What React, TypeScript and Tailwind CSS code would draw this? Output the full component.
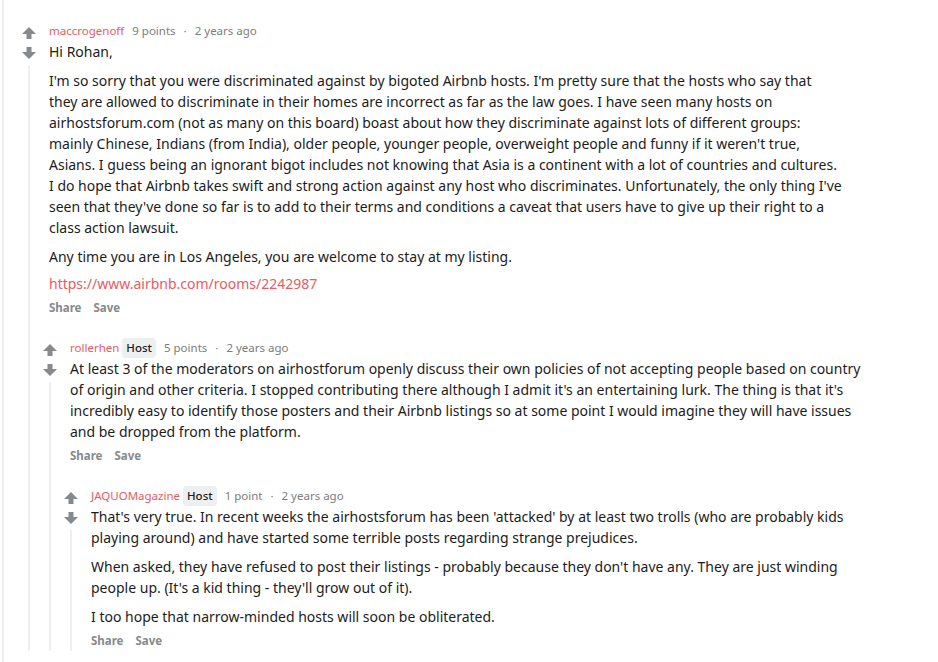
import React from "react";

type CommentData = {
  author: string;
  host?: boolean;
  points: string;
  age: string;
  body: React.ReactNode;
  replies?: CommentData[];
};

function Arrow({ down }: { down?: boolean }) {
  return (
    <svg
      width="14"
      height="12"
      viewBox="0 0 14 12"
      className={down ? "rotate-180" : ""}
      fill="#878a8c"
    >
      <polygon points="7,0 14,7 9.5,7 9.5,12 4.5,12 4.5,7 0,7" />
    </svg>
  );
}

function Comment({ c }: { c: CommentData }) {
  return (
    <div className="flex">
      <div className="flex w-5 shrink-0 flex-col items-center pt-1">
        <div className="flex h-4 w-4 items-center justify-center">
          <Arrow />
        </div>
        <div className="mt-1 flex h-4 w-4 items-center justify-center">
          <Arrow down />
        </div>
        <div className="mt-1 w-[2px] flex-1 bg-[#edeff1]" />
      </div>
      <div className="ml-2.5 min-w-0 flex-1">
        <div className="flex h-5 items-center text-[11.5px] text-[#7c7c7c]">
          <span className="text-[#ea5a5f]">{c.author}</span>
          {c.host && (
            <span className="ml-[3px] rounded-sm bg-[#edeff1] px-1 py-px font-medium text-[#1c1c1c]">
              Host
            </span>
          )}
          <span className="ml-2">{c.points}</span>
          <span className="mx-2">·</span>
          <span>{c.age}</span>
        </div>
        <div className="text-[14px] leading-[21px] text-[#1c1c1c]">{c.body}</div>
        <div className="mt-1 flex h-5 items-center gap-3 text-[11.5px] font-bold text-[#878a8c]">
          <span>Share</span>
          <span>Save</span>
        </div>
        {c.replies && (
          <div className="-ml-[9px] mt-5">
            {c.replies.map((r, i) => (
              <Comment key={i} c={r} />
            ))}
          </div>
        )}
      </div>
    </div>
  );
}

const thread: CommentData = {
  author: "maccrogenoff",
  points: "9 points",
  age: "2 years ago",
  body: (
    <>
      <p className="mb-2">Hi Rohan,</p>
      <p className="mb-2">
        I'm so sorry that you were discriminated against by bigoted Airbnb hosts. I'm pretty sure that the hosts who say that
        <br />
        they are allowed to discriminate in their homes are incorrect as far as the law goes. I have seen many hosts on
        <br />
        airhostsforum.com (not as many on this board) boast about how they discriminate against lots of different groups:
        <br />
        mainly Chinese, Indians (from India), older people, younger people, overweight people and funny if it weren't true,
        <br />
        Asians. I guess being an ignorant bigot includes not knowing that Asia is a continent with a lot of countries and cultures.
        <br />
        I do hope that Airbnb takes swift and strong action against any host who discriminates. Unfortunately, the only thing I've
        <br />
        seen that they've done so far is to add to their terms and conditions a caveat that users have to give up their right to a
        <br />
        class action lawsuit.
      </p>
      <p className="mb-1.5">Any time you are in Los Angeles, you are welcome to stay at my listing.</p>
      <p>
        <a className="text-[#ea5a5f]">https://www.airbnb.com/rooms/2242987</a>
      </p>
    </>
  ),
  replies: [
    {
      author: "rollerhen",
      host: true,
      points: "5 points",
      age: "2 years ago",
      body: (
        <p>
          At least 3 of the moderators on airhostforum openly discuss their own policies of not accepting people based on country
          <br />
          of origin and other criteria. I stopped contributing there although I admit it's an entertaining lurk. The thing is that it's
          <br />
          incredibly easy to identify those posters and their Airbnb listings so at some point I would imagine they will have issues
          <br />
          and be dropped from the platform.
        </p>
      ),
      replies: [
        {
          author: "JAQUOMagazine",
          host: true,
          points: "1 point",
          age: "2 years ago",
          body: (
            <>
              <p className="mb-2">
                That's very true. In recent weeks the airhostsforum has been 'attacked' by at least two trolls (who are probably kids
                <br />
                playing around) and have started some terrible posts regarding strange prejudices.
              </p>
              <p className="mb-2">
                When asked, they have refused to post their listings - probably because they don't have any. They are just winding
                <br />
                people up. (It's a kid thing - they'll grow out of it).
              </p>
              <p>I too hope that narrow-minded hosts will soon be obliterated.</p>
            </>
          ),
        },
      ],
    },
  ],
};

export default function App() {
  return (
    <div
      className="flex h-[662px] w-[938px] overflow-hidden bg-white pt-[21px]"
      style={{ fontFamily: '"Noto Sans", "Open Sans", sans-serif' }}
    >
      <div className="-mt-[21px] ml-[2px] w-[2px] shrink-0 bg-[#edeff1]" />
      <div className="ml-[15px] flex-1">
        <Comment c={thread} />
      </div>
    </div>
  );
}
